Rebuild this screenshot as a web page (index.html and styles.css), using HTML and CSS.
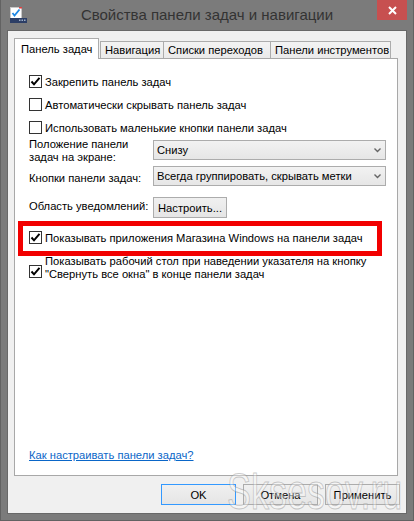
FILE: index.html
```html
<!DOCTYPE html>
<html lang="ru">
<head>
<meta charset="utf-8">
<title>Свойства панели задач и навигации</title>
<link rel="stylesheet" href="styles.css">
</head>
<body>
<div class="window">
  <div class="titlebar">
    <svg class="app-icon" width="17" height="16" viewBox="0 0 17 16">
      <rect x="0.5" y="0.5" width="11" height="11" fill="#fff" stroke="#c8c8c8"/>
      <rect x="9" y="0" width="3" height="1.5" fill="#e04040"/>
      <path d="M2.5 6 L4.5 8.5 L9.5 2.5" fill="none" stroke="#1e88e5" stroke-width="1.8"/>
      <rect x="0" y="11" width="17" height="5" fill="#2c3e66"/>
      <rect x="9" y="12.5" width="1.5" height="1.5" fill="#9fb0c8"/>
      <rect x="11.5" y="12.5" width="1.5" height="1.5" fill="#9fb0c8"/>
      <rect x="14" y="12.5" width="1.5" height="1.5" fill="#9fb0c8"/>
    </svg>
    <div class="title">Свойства панели задач и навигации</div>
    <div class="close-wrap">
      <div class="close">
        <svg width="9" height="9" viewBox="0 0 9 9"><path d="M1 1 L8 8 M8 1 L1 8" stroke="#fff" stroke-width="2"/></svg>
      </div>
    </div>
  </div>
  <div class="client">
    <div class="tabs">
      <div class="tab active">Панель задач</div>
      <div class="tab t-nav">Навигация</div>
      <div class="tab t-jump">Списки переходов</div>
      <div class="tab t-tool">Панели инструментов</div>
    </div>
    <div class="panel">
      <div class="check-row"><span class="cb checked"><svg width="11" height="11" viewBox="0 0 11 11"><path d="M1.5 5.5 L4 8.3 L9.5 1.8" fill="none" stroke="#000" stroke-width="2"/></svg></span><span>Закрепить панель задач</span></div>
      <div class="check-row"><span class="cb"></span><span>Автоматически скрывать панель задач</span></div>
      <div class="check-row"><span class="cb"></span><span>Использовать маленькие кнопки панели задач</span></div>

      <div class="form-grid">
        <div class="label two-line">Положение панели<br>задач на экране:</div>
        <div class="select sel-a"><span>Снизу</span><svg width="7" height="5" viewBox="0 0 7 5"><path d="M0.5 0.5 L3.5 3.5 L6.5 0.5" fill="none" stroke="#666" stroke-width="1.4"/></svg></div>
        <div class="label label-b">Кнопки панели задач:</div>
        <div class="select sel-b"><span>Всегда группировать, скрывать метки</span><svg width="7" height="5" viewBox="0 0 7 5"><path d="M0.5 0.5 L3.5 3.5 L6.5 0.5" fill="none" stroke="#666" stroke-width="1.4"/></svg></div>
        <div class="label label-c">Область уведомлений:</div>
        <div class="btn-cell"><button class="btn small">Настроить...</button></div>
      </div>

      <div class="check-row store"><span class="cb checked"><svg width="11" height="11" viewBox="0 0 11 11"><path d="M1.5 5.5 L4 8.3 L9.5 1.8" fill="none" stroke="#000" stroke-width="2"/></svg></span><span>Показывать приложения Магазина Windows на панели задач</span></div>
      <div class="check-row multi"><span class="cb checked"><svg width="11" height="11" viewBox="0 0 11 11"><path d="M1.5 5.5 L4 8.3 L9.5 1.8" fill="none" stroke="#000" stroke-width="2"/></svg></span><span class="multi-text">Показывать рабочий стол при наведении указателя на кнопку<br>"Свернуть все окна" в конце панели задач</span></div>

      <div class="spacer"></div>
      <a class="help" href="#">Как настраивать панели задач?</a>

      <div class="redbox"></div>
    </div>
    <div class="buttons">
      <button class="btn default">OK</button>
      <button class="btn">Отмена</button>
      <button class="btn">Применить</button>
    </div>
  </div>
  <div class="watermark">Sksesov.ru</div>
</div>
</body>
</html>
```

FILE: styles.css
```css
html, body {
  margin: 0;
  padding: 0;
}
body {
  width: 414px;
  height: 521px;
  overflow: hidden;
  background: #7b7b7b;
  font-family: "Liberation Sans", Arial, sans-serif;
  font-size: 11.2px;
  color: #000;
}
.window {
  position: relative;
  width: 414px;
  height: 521px;
  box-sizing: border-box;
  display: flex;
  flex-direction: column;
  background: #7b7b7b;
  border-left: 1px solid #626262;
  border-right: 1px solid #626262;
  border-bottom: 1px solid #626262;
  overflow: hidden;
}
.titlebar {
  height: 30px;
  display: grid;
  grid-template-columns: 1fr auto 1fr;
  align-items: start;
}
.app-icon {
  margin: 7px 0 0 9px;
}
.title {
  font-size: 15px;
  color: #333;
  line-height: 30px;
  height: 30px;
  white-space: nowrap;
}
.close-wrap {
  display: flex;
  justify-content: flex-end;
}
.close {
  width: 30px;
  height: 20px;
  margin-right: 6px;
  background: #c75050;
  display: flex;
  align-items: center;
  justify-content: center;
}
.client {
  flex: 1;
  margin: 0 6px 6px 6px;
  border: 1px solid #686868;
  background: #f0f0f0;
  padding: 7px 8px 8px 6px;
  display: flex;
  flex-direction: column;
}
.tabs {
  display: flex;
  align-items: flex-end;
  height: 21px;
  margin-bottom: -1px;
  position: relative;
  z-index: 1;
}
.tab {
  box-sizing: border-box;
  height: 17px;
  margin-bottom: 1px;
  border: 1px solid #acacac;
  border-bottom: none;
  background: linear-gradient(#f3f3f3, #eaeaea);
  padding: 0 0 0 4px;
  line-height: 16px;
  white-space: nowrap;
  margin-left: -1px;
}
.t-nav { width: 64px; margin-left: 0; }
.t-jump { width: 108px; }
.t-tool { width: 121px; }
.tab.active {
  height: 21px;
  margin-bottom: 0;
  margin-left: 0;
  margin-right: 1px;
  background: #fff;
  padding: 0 0 0 6px;
  line-height: 20px;
  width: 85px;
}
.panel {
  position: relative;
  z-index: 0;
  height: 418px;
  box-sizing: border-box;
  border: 1px solid #a8a8a8;
  background: #fff;
  padding: 11px 0 12px 14px;
  display: flex;
  flex-direction: column;
}
.check-row {
  display: flex;
  align-items: center;
  height: 23px;
  white-space: nowrap;
}
.cb {
  box-sizing: border-box;
  width: 13px;
  height: 13px;
  border: 1px solid #333;
  background: #fff;
  margin-right: 3px;
  flex: none;
  display: flex;
  align-items: center;
  justify-content: center;
}
.form-grid {
  display: grid;
  grid-template-columns: 124px 233px;
  grid-template-rows: 21px 20px 21px;
  row-gap: 6px;
}
.label {
  white-space: nowrap;
}
.two-line {
  line-height: 13px;
  margin-top: -1px;
}
.label-b {
  line-height: 20px;
  margin-top: 2px;
}
.label-c {
  line-height: 21px;
  margin-top: 4px;
}
.select {
  box-sizing: border-box;
  height: 20px;
  border: 1px solid #acacac;
  background: linear-gradient(#f2f2f2, #e6e6e6);
  display: flex;
  align-items: center;
  justify-content: space-between;
  padding: 0 4px 0 3px;
}
.sel-a {
  margin-top: 1px;
}
.btn-cell {
  padding-top: 5px;
}
.btn {
  box-sizing: border-box;
  font-family: "Liberation Sans", Arial, sans-serif;
  font-size: 11.2px;
  color: #000;
  height: 21px;
  width: 75px;
  border: 1px solid #acacac;
  background: linear-gradient(#f0f0f0, #e5e5e5);
  padding: 0;
  margin: 0;
  border-radius: 0;
}
.btn.small {
  width: 74px;
}
.btn.default {
  border-color: #3399ff;
}
.check-row.store {
  margin-top: 13px;
}
.check-row.multi {
  height: auto;
  align-items: flex-start;
  margin-top: 6px;
}
.check-row.multi .cb {
  margin-top: 10px;
}
.multi-text {
  line-height: 13px;
}
.spacer {
  flex: 1;
}
.help {
  color: #0a66c8;
  text-decoration: underline;
  line-height: 15px;
  align-self: flex-start;
}
.redbox {
  position: absolute;
  left: 3px;
  top: 162px;
  width: 364px;
  height: 35px;
  box-sizing: border-box;
  border: 5px solid #f20000;
}
.buttons {
  display: flex;
  justify-content: flex-end;
  gap: 7px;
  margin-top: 8px;
  margin-right: -2px;
}
.watermark {
  position: absolute;
  left: 226px;
  top: 467px;
  font-family: "Liberation Sans", Arial, sans-serif;
  font-size: 50px;
  line-height: 50px;
  white-space: nowrap;
  color: rgba(255, 255, 255, 0.35);
  -webkit-text-stroke: 1px rgba(140, 140, 140, 0.45);
  transform: scaleX(0.72);
  transform-origin: left top;
  pointer-events: none;
}
```
